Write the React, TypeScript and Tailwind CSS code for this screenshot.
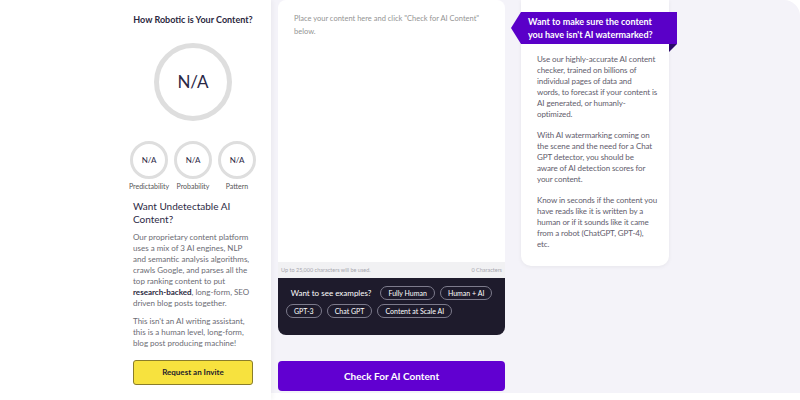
import type { ReactNode } from 'react'

function Ring({ size, stroke, label }: { size: number; stroke: number; label: string }) {
  const r = (size - stroke) / 2
  return (
    <div className="relative flex items-center justify-center" style={{ width: size, height: size }}>
      <svg width={size} height={size} className="absolute inset-0">
        <circle cx={size / 2} cy={size / 2} r={r} fill="none" stroke="#dedede" strokeWidth={stroke} />
      </svg>
      <span className={size > 50 ? 'text-[17px] text-[#2a2745]' : 'text-[8px] text-[#2a2745]'}>{label}</span>
    </div>
  )
}

function Pill({ children }: { children: ReactNode }) {
  return (
    <span className="h-[14px] px-[7px] flex items-center rounded-full border border-[#7d7b8c] text-[7px] text-white whitespace-nowrap">
      {children}
    </span>
  )
}

// right card copy, broken where the original lays it out
const sideCopy = [
  ['Use our highly-accurate AI content', 'checker, trained on billions of', 'individual pages of data and', 'words, to forecast if your content is', 'AI generated, or humanly-', 'optimized.'],
  ['With AI watermarking coming on', 'the scene and the need for a Chat', 'GPT detector, you should be', 'aware of AI detection scores for', 'your content.'],
  ['Know in seconds if the content you', 'have reads like it is written by a', 'human or if it sounds like it came', 'from a robot (ChatGPT, GPT-4),', 'etc.'],
]

export default function App() {
  return (
    <div className="flex w-[800px] h-[400px] bg-white font-['Lato',sans-serif] overflow-hidden">
      {/* left score panel */}
      <aside className="w-[271px] shrink-0 pl-[133px] pr-[18px] pt-[14px] bg-white shadow-[2px_0_4px_rgba(0,0,0,0.04)] z-10">
        <h2 className="text-[9px] leading-[12px] font-bold text-[#2b2840] text-center">How Robotic is Your Content?</h2>
        <div className="flex justify-center mt-[17px]">
          <Ring size={78} stroke={5} label="N/A" />
        </div>
        <div className="flex justify-center gap-[6px] mt-[20px] -mx-[3px]">
          {['Predictability', 'Probability', 'Pattern'].map((l) => (
            <div key={l} className="flex flex-col items-center w-[38px]">
              <Ring size={38} stroke={3} label="N/A" />
              <span className="mt-[2px] text-[7px] text-[#555] whitespace-nowrap">{l}</span>
            </div>
          ))}
        </div>
        <h3 className="mt-[8px] text-[10px] leading-[13px] text-[#2d2a45]">Want Undetectable AI Content?</h3>
        <p className="mt-[6px] text-[8px] leading-[11px] text-[#6b6b73]">
          Our proprietary content platform uses a mix of 3 AI engines, NLP and semantic analysis algorithms, crawls
          Google, and parses all the top ranking content to put <b className="text-[#2b2840]">research-backed</b>,
          long-form, SEO driven blog posts together.
        </p>
        <p className="mt-[7px] text-[8px] leading-[11px] text-[#6b6b73]">
          This isn't an AI writing assistant, this is a human level, long-form, blog post producing machine!
        </p>
        <button className="mt-[11px] w-full h-[25px] rounded-[3px] bg-[#f7e23e] border border-[#8a7d2a] text-[8px] font-bold text-[#1e1b2b]">
          Request an Invite
        </button>
      </aside>

      {/* main area */}
      <main className="flex-1 h-[393px] bg-[#f4f3f9] rounded-tr-[16px] flex pl-[7px] gap-[16px]">
        <section className="w-[227px] flex flex-col">
          <div className="h-[262px] bg-white rounded-t-[8px] px-[16px] pt-[12px]">
            <p className="text-[7.5px] leading-[13px] text-[#949494]">
              Place your content here and click "Check for AI Content" below.
            </p>
          </div>
          <div className="h-[16px] bg-[#f1f1f3] flex items-center justify-between px-[3px] text-[5.5px] text-[#a6a6ad]">
            <span>Up to 25,000 characters will be used.</span>
            <span>0 Characters</span>
          </div>
          <div className="h-[57px] bg-[#1e1b2c] rounded-b-[8px] pt-[8px] flex flex-col gap-[4px]">
            <div className="flex items-center justify-center gap-[5px]">
              <span className="text-[8px] text-white mr-[4px]">Want to see examples?</span>
              <Pill>Fully Human</Pill>
              <Pill>Human + AI</Pill>
            </div>
            <div className="flex items-center gap-[5px] pl-[8px]">
              <Pill>GPT-3</Pill>
              <Pill>Chat GPT</Pill>
              <Pill>Content at Scale AI</Pill>
            </div>
          </div>
          <button className="mt-[26px] h-[30px] rounded-[4px] bg-[#6100d1] text-white text-[10px] font-bold">
            Check For AI Content
          </button>
        </section>

        <section className="relative w-[148px] h-[266px] bg-white rounded-b-[10px] shadow-[0_1px_4px_rgba(0,0,0,0.06)] pl-[16px] pt-[54px] text-[8px] tracking-[-0.1px] leading-[11px] text-[#5f5d6c]">
          <div className="absolute top-[12px] -left-[10px] w-[166px] tracking-normal">
            <div className="h-[32px] bg-[#5a00c8] pl-[17px] flex flex-col justify-center text-[9px] leading-[13px] font-bold text-white [clip-path:polygon(10px_0,100%_0,100%_100%,10px_100%,0_50%)]">
              <span>Want to make sure the content</span>
              <span>you have isn't AI watermarked?</span>
            </div>
            <div className="ml-auto w-[8px] h-[8px] bg-[#2a0a6a] [clip-path:polygon(0_0,100%_0,0_100%)]" />
          </div>
          {sideCopy.map((lines, i) => (
            <p key={i} className={`whitespace-nowrap ${i > 0 ? 'mt-[10px]' : ''}`}>
              {lines.map((line) => (
                <span key={line} className="block">
                  {line}
                </span>
              ))}
            </p>
          ))}
        </section>
      </main>
    </div>
  )
}
